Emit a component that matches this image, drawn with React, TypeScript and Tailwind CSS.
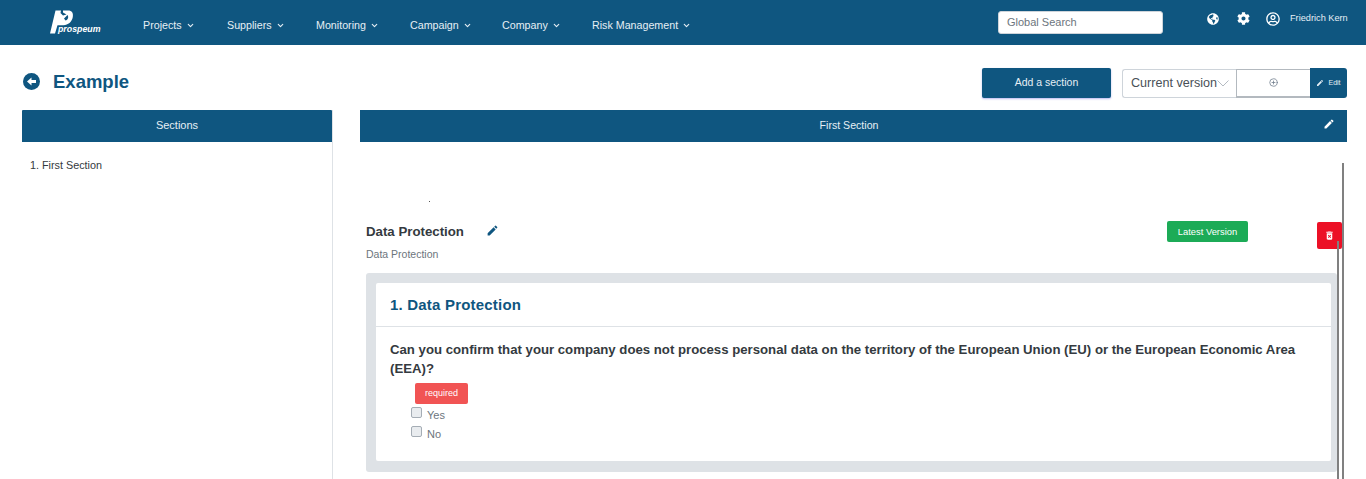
import { ChevronDown, CirclePlus } from "lucide-react";
import { FaCog, FaGlobeAmericas, FaRegUserCircle } from "react-icons/fa";
import { MdDeleteForever, MdEdit } from "react-icons/md";

const NAV = [
  { label: "Projects", w: "w-[84px]" },
  { label: "Suppliers", w: "w-[89px]" },
  { label: "Monitoring", w: "w-[94px]" },
  { label: "Campaign", w: "w-[92px]" },
  { label: "Company", w: "w-[90px]" },
  { label: "Risk Management", w: "w-[110px]" },
];

const Logo = () => (
  <div className="relative w-[52px] h-[24px] -mt-[1px]">
    <svg width="24" height="24" viewBox="0 0 24 24">
      <path
        fill="#fff"
        fillRule="evenodd"
        d="M5.5 0.5 L11 0.5 L10.5 3 L13 5.5 L16.5 4.5 L13 2.5 L13 0.5 L18 0.5 C22 0.5 23.5 3 22.8 7 C22 12 18 15 13.5 15.2 L7.5 15.2 L5 23.5 L0 23.5 Z M17.5 5 L14 8.5 L15.5 10.5 C18 10 19 7 17.5 5 Z"
      />
    </svg>
    <span className="absolute left-[8px] top-[15px] text-[8.8px] leading-[9px] italic font-bold text-white whitespace-nowrap">prospeum</span>
  </div>
);

const Check = ({ label }: { label: string }) => (
  <div className="flex items-start gap-[5px] h-[19px]">
    <span className="mt-[1px] w-[11px] h-[11px] rounded-[2px] border border-[#a5adb5] bg-[#e9ecef]" />
    <span className="text-[11px] text-[#6c757d] mt-[2px] leading-[14px]">{label}</span>
  </div>
);

export default function App() {
  return (
    <div className="relative w-[1366px] h-[479px] overflow-hidden bg-white font-['Liberation_Sans',Arial,sans-serif] text-[#212529]">
      <header className="h-[45px] bg-[#0f5680] flex items-center text-white">
        <div className="pl-[50px] w-[143px] shrink-0">
          <Logo />
        </div>
        <nav className="flex items-center w-[855px] shrink-0 pt-[6px]">
          {NAV.map((n) => (
            <div key={n.label} className={`${n.w} shrink-0 flex items-center gap-[4px] text-[10.7px] text-[#e6eff5]`}>
              <span className="whitespace-nowrap">{n.label}</span>
              <ChevronDown size={9} strokeWidth={3} />
            </div>
          ))}
        </nav>
        <div className="w-[165px] h-[23px] shrink-0 bg-white rounded-[3px] border border-[#ced4da] text-[11px] text-[#6c757d] flex items-center pl-[8px]">
          Global Search
        </div>
        <div className="flex items-center ml-[44px] mb-[8px]">
          <FaGlobeAmericas size={12} className="text-white" />
          <FaCog size={13} className="text-white ml-[18px]" />
          <FaRegUserCircle size={14} className="text-white ml-[16px]" />
          <span className="ml-[10px] text-[9.2px] whitespace-nowrap text-[#e6eff5]">Friedrich Kern</span>
        </div>
      </header>

      <div className="flex items-center h-[65px] pl-[23px] pr-[19px]">
        <span className="w-[17px] h-[17px] rounded-full bg-[#0f5680] flex items-center justify-center mt-[7px]">
          <svg width="11" height="11" viewBox="0 0 11 11">
            <path d="M1 5.5 L5.5 1.5 V4 H10 V7 H5.5 V9.5 Z" fill="#fff" />
          </svg>
        </span>
        <h1 className="ml-[13px] text-[18.5px] font-bold text-[#0f5680] leading-none mt-[9px]">Example</h1>
        <div className="ml-auto flex items-center mt-[11px]">
          <button className="w-[129px] h-[30px] rounded-[2px] bg-[#0f5680] text-[10.5px] text-[#e6eff5] shadow-[0_1px_2px_rgba(80,80,220,0.4)]">
            Add a section
          </button>
          <div className="ml-[11px] w-[114px] h-[29px] flex items-center pl-[8px] border border-[#ced4da] border-r-0 rounded-l-[3px] text-[12.6px] text-[#495057] whitespace-nowrap">
            Current version
            <svg width="12" height="7" viewBox="0 0 12 7" className="shrink-0">
              <path d="M0.5 0.5 L6 6 L11.5 0.5" fill="none" stroke="#b4bbc2" strokeWidth="1" />
            </svg>
          </div>
          <div className="w-[74px] h-[29px] flex items-center justify-center border border-[#b3b9bf] border-r-0 border-b-2">
            <CirclePlus size={9} className="text-[#6c7a89]" />
          </div>
          <div className="w-[37px] h-[30px] bg-[#0f5680] rounded-r-[3px] flex items-center justify-center gap-[4px] text-[7px] text-[#e6eff5]">
            <MdEdit size={8} />
            Edit
          </div>
        </div>
      </div>

      <main className="flex pl-[22px] pr-[19px] h-[369px]">
        <aside className="w-[311px] shrink-0 border-r border-[#dee2e6]">
          <div className="h-[32px] bg-[#0f5680] flex items-center justify-center text-[11px] text-[#e6eff5] rounded-t-[1px] pb-[1px]">
            Sections
          </div>
          <div className="pl-[8px] pt-[17px] text-[10.8px] leading-[13px] text-[#343a40]">1. First Section</div>
        </aside>

        <section className="ml-[27px] flex-1 min-w-0">
          <div className="relative h-[32px] bg-[#0f5680] flex items-center justify-center text-[10.6px] text-[#e6eff5] pr-[9px]">
            First Section
            <MdEdit size={12} className="absolute right-[12px] top-[8px] text-white" />
          </div>

          <div className="relative pl-[6px] pr-[10px]">
            <div className="h-[60px] pl-[63px] pt-[59px]">
              <div className="w-[1px] h-[1px] bg-[#555]" />
            </div>
            <div className="flex items-start h-[47px] mt-[19px]">
              <div className="flex-1 min-w-0">
                <div className="flex items-center h-[20px] pt-[1px]">
                  <span className="text-[13.25px] font-bold text-[#343a40]">Data Protection</span>
                  <MdEdit size={13} className="ml-[22px] -mt-[3px] text-[#0f5680]" />
                </div>
                <div className="mt-[6px] text-[10.5px] leading-[14px] text-[#6c757d]">Data Protection</div>
              </div>
              <div className="w-[81px] h-[21px] mr-[69px] pt-[1px] rounded-[2px] bg-[#1cab57] text-white text-[9.4px] flex items-center justify-center">
                Latest Version
              </div>
              <div className="w-[25px] h-[27px] mt-[1px] rounded-[2px] bg-[#ec1026] flex items-center justify-center -mr-[5px]">
                <MdDeleteForever size={11} className="text-white" />
              </div>
            </div>

            <div className="rounded-[3px] bg-[#dee2e6] pl-[10px] pr-[6px] py-[10px] h-[199px] mt-[5px]">
              <div className="h-[178px] bg-white rounded-[2px]">
                <div className="h-[44px] pl-[14px] pt-[1px] flex items-center border-b border-[#dee2e6] text-[15px] font-bold text-[#0f5680] tracking-[0.2px]">
                  1. Data Protection
                </div>
                <div className="px-[14px] pt-[13px]">
                  <p className="text-[13.2px] leading-[19px] font-bold text-[#343a40]">
                    Can you confirm that your company does not process personal data on the territory of the European Union (EU) or the European Economic Area (EEA)?
                  </p>
                  <div className="ml-[25px] mt-[5px] w-[53px] h-[21px] rounded-[2px] bg-[#f15454] text-white text-[9px] flex items-center justify-center">
                    required
                  </div>
                  <div className="ml-[21px] mt-[2px]">
                    <Check label="Yes" />
                    <Check label="No" />
                  </div>
                </div>
              </div>
            </div>

            {/* stray scrollbars */}
            <div className="absolute right-[3px] top-[21px] w-[2px] h-[330px] bg-[#808080]" />
            <div className="absolute right-[8px] top-[99px] w-[2px] h-[250px] bg-[#808080]" />
          </div>
        </section>
      </main>
    </div>
  );
}
